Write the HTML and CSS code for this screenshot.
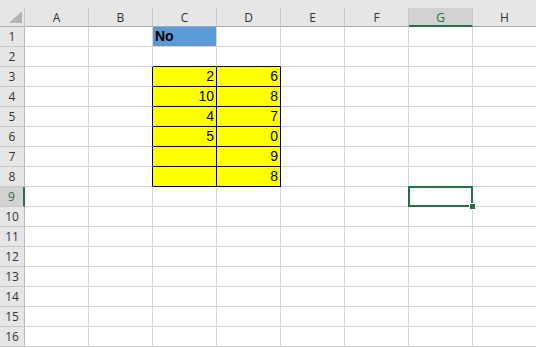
FILE: index.html
```html
<!DOCTYPE html>
<html>
<head>
  <meta charset="utf-8">
  <link rel="stylesheet" href="styles.css">
  <title>Sheet1</title>
</head>
<body>
  <div class="sheet">
    <div class="strip"></div>

    <div class="corner"><svg width="13" height="12" viewBox="0 0 13 12"><polygon points="13,0 13,12 0,12" fill="#b4b4b4"/></svg></div>
    <div class="colhead">A</div>
    <div class="colhead">B</div>
    <div class="colhead">C</div>
    <div class="colhead">D</div>
    <div class="colhead">E</div>
    <div class="colhead">F</div>
    <div class="colhead active">G</div>
    <div class="colhead">H</div>

    <div class="rowhead">1</div>
    <div class="cell"></div><div class="cell"></div><div class="cell title">No</div><div class="cell"></div><div class="cell"></div><div class="cell"></div><div class="cell"></div><div class="cell"></div>

    <div class="rowhead">2</div>
    <div class="cell"></div><div class="cell"></div><div class="cell edge-b"></div><div class="cell edge-b"></div><div class="cell"></div><div class="cell"></div><div class="cell"></div><div class="cell"></div>

    <div class="rowhead">3</div>
    <div class="cell"></div><div class="cell edge-r"></div><div class="cell num">2</div><div class="cell num">6</div><div class="cell"></div><div class="cell"></div><div class="cell"></div><div class="cell"></div>

    <div class="rowhead">4</div>
    <div class="cell"></div><div class="cell edge-r"></div><div class="cell num">10</div><div class="cell num">8</div><div class="cell"></div><div class="cell"></div><div class="cell"></div><div class="cell"></div>

    <div class="rowhead">5</div>
    <div class="cell"></div><div class="cell edge-r"></div><div class="cell num">4</div><div class="cell num">7</div><div class="cell"></div><div class="cell"></div><div class="cell"></div><div class="cell"></div>

    <div class="rowhead">6</div>
    <div class="cell"></div><div class="cell edge-r"></div><div class="cell num">5</div><div class="cell num">0</div><div class="cell"></div><div class="cell"></div><div class="cell"></div><div class="cell"></div>

    <div class="rowhead">7</div>
    <div class="cell"></div><div class="cell edge-r"></div><div class="cell num"></div><div class="cell num">9</div><div class="cell"></div><div class="cell"></div><div class="cell"></div><div class="cell"></div>

    <div class="rowhead">8</div>
    <div class="cell"></div><div class="cell edge-r"></div><div class="cell num"></div><div class="cell num">8</div><div class="cell"></div><div class="cell"></div><div class="cell"></div><div class="cell"></div>

    <div class="rowhead active">9</div>
    <div class="cell"></div><div class="cell"></div><div class="cell"></div><div class="cell"></div><div class="cell"></div><div class="cell"></div><div class="cell selected"><span class="handle"></span></div><div class="cell"></div>

    <div class="rowhead">10</div>
    <div class="cell"></div><div class="cell"></div><div class="cell"></div><div class="cell"></div><div class="cell"></div><div class="cell"></div><div class="cell"></div><div class="cell"></div>

    <div class="rowhead">11</div>
    <div class="cell"></div><div class="cell"></div><div class="cell"></div><div class="cell"></div><div class="cell"></div><div class="cell"></div><div class="cell"></div><div class="cell"></div>

    <div class="rowhead">12</div>
    <div class="cell"></div><div class="cell"></div><div class="cell"></div><div class="cell"></div><div class="cell"></div><div class="cell"></div><div class="cell"></div><div class="cell"></div>

    <div class="rowhead">13</div>
    <div class="cell"></div><div class="cell"></div><div class="cell"></div><div class="cell"></div><div class="cell"></div><div class="cell"></div><div class="cell"></div><div class="cell"></div>

    <div class="rowhead">14</div>
    <div class="cell"></div><div class="cell"></div><div class="cell"></div><div class="cell"></div><div class="cell"></div><div class="cell"></div><div class="cell"></div><div class="cell"></div>

    <div class="rowhead">15</div>
    <div class="cell"></div><div class="cell"></div><div class="cell"></div><div class="cell"></div><div class="cell"></div><div class="cell"></div><div class="cell"></div><div class="cell"></div>

    <div class="rowhead">16</div>
    <div class="cell"></div><div class="cell"></div><div class="cell"></div><div class="cell"></div><div class="cell"></div><div class="cell"></div><div class="cell"></div><div class="cell"></div>
  </div>
</body>
</html>
```

FILE: styles.css
```css
html, body { margin: 0; padding: 0; background: #fff; overflow: hidden; }

.sheet {
  display: grid;
  grid-template-columns: 25px repeat(8, 64px);
  grid-template-rows: 8px 19px repeat(16, 20px);
  font-family: "Liberation Sans", Arial, sans-serif;
}

.strip {
  grid-column: 1 / -1;
  background: #e6e6e6;
}

.corner {
  display: flex;
  justify-content: flex-end;
  align-items: flex-end;
  padding: 0 2px 3px 0;
  background: #e6e6e6;
  border-right: 1px solid #c8c8c8;
  border-bottom: 1px solid #ababab;
  box-sizing: border-box;
}

.colhead {
  display: flex;
  justify-content: center;
  align-items: center;
  background: #e6e6e6;
  border-right: 1px solid #c8c8c8;
  border-bottom: 1px solid #ababab;
  box-sizing: border-box;
  font-family: "Open Sans", "Noto Sans", sans-serif;
  font-size: 12px;
  color: #333;
  padding-top: 1px;
}
.colhead.active {
  background: #d2d2d2;
  color: #217346;
  border-bottom: 2px solid #217346;
  padding-top: 2px;
}

.rowhead {
  display: flex;
  justify-content: center;
  align-items: center;
  background: #e6e6e6;
  border-right: 1px solid #bcbcbc;
  border-bottom: 1px solid #c8c8c8;
  box-sizing: border-box;
  font-family: "Open Sans", "Noto Sans", sans-serif;
  font-size: 12px;
  color: #333;
}
.rowhead.active {
  background: #d2d2d2;
  color: #217346;
  border-right: 2px solid #217346;
}

.cell {
  position: relative;
  display: flex;
  align-items: flex-end;
  border-right: 1px solid #d4d4d4;
  border-bottom: 1px solid #d4d4d4;
  box-sizing: border-box;
  font-size: 14px;
  line-height: 17px;
  color: #000;
  padding: 0 2px 1px 2px;
}

.cell.edge-r { border-right-color: #000; }
.cell.edge-b { border-bottom-color: #000; }

.cell.title {
  background: #5b9bd5;
  font-weight: bold;
}

.cell.num {
  background: #ffff00;
  justify-content: flex-end;
  border-right-color: #000;
  border-bottom-color: #000;
}

.cell.selected::after {
  content: "";
  position: absolute;
  left: -1px;
  top: -1px;
  right: -1px;
  bottom: -1px;
  border: 2px solid #217346;
}
.handle {
  position: absolute;
  right: -4px;
  bottom: -4px;
  width: 5px;
  height: 5px;
  background: #217346;
  border: 1px solid #fff;
  z-index: 1;
}
```
